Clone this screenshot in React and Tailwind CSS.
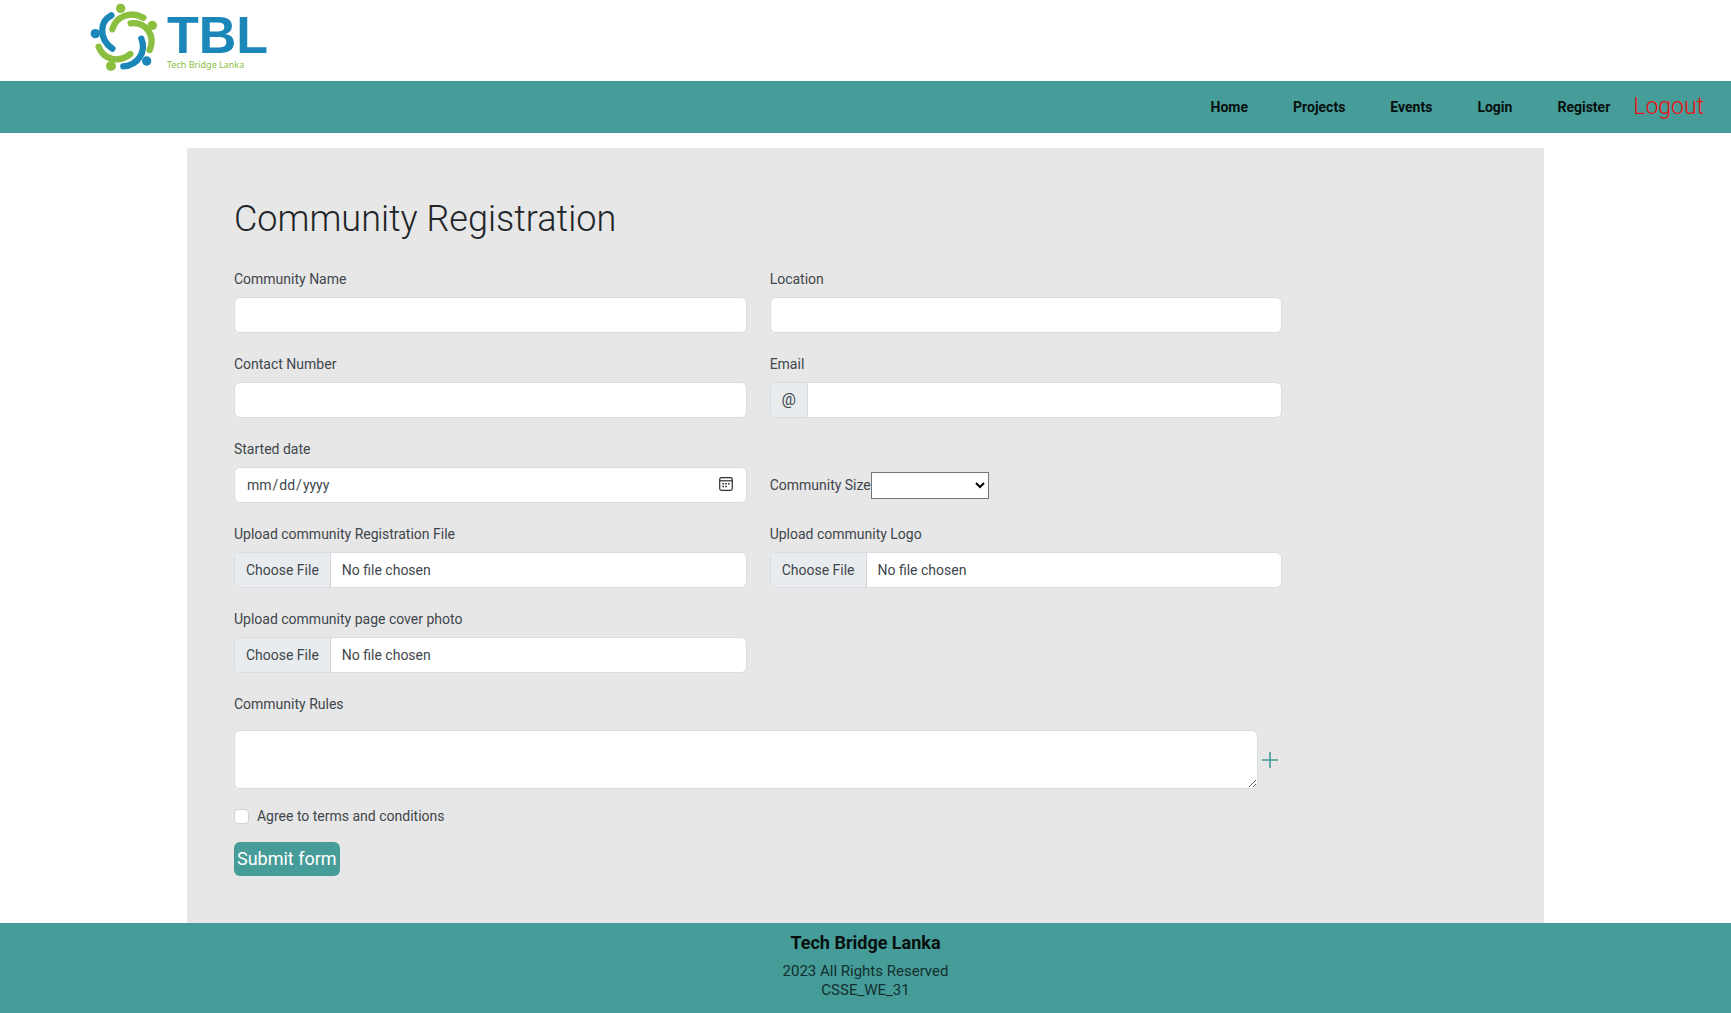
import React from "react";

const navLinks = ["Home", "Projects", "Events", "Login", "Register"];

const labelClass = "block h-6 mb-1.5 text-sm leading-6";
const controlClass =
  "block w-full h-9 rounded-md border border-[#d9dde1] bg-white px-[11px] text-sm text-[#40464c] outline-none";
const fileClass =
  "block w-full h-9 rounded-md border border-[#d9dde1] bg-white text-sm leading-[34px] text-[#40464c] overflow-hidden file:h-[34px] file:px-[11px] file:mr-[11px] file:border-0 file:border-r file:border-solid file:border-[#d3d8dd] file:bg-[#e9ecef] file:text-[#40464c] file:rounded-none";

function Logo() {
  return (
    <svg viewBox="0 0 600 240" className="h-20 w-[200px]" role="img" aria-label="TBL Tech Bridge Lanka">
      <g fill="none" strokeWidth="19" strokeLinecap="round">
        <path d="M97 88C108 48 153 32 190 53" stroke="#8bbf3f" />
        <path d="M152 70C198 64 228 108 209 150" stroke="#8bbf3f" />
        <path d="M94 46C56 66 58 119 97 146" stroke="#1b87b9" />
        <path d="M56 140C70 180 117 190 151 162" stroke="#8bbf3f" />
        <path d="M184 116C200 155 174 196 130 199" stroke="#1b87b9" />
      </g>
      <g fill="#8bbf3f">
        <circle cx="122" cy="25" r="14" />
        <circle cx="217" cy="76" r="14" />
        <circle cx="93" cy="198" r="15" />
      </g>
      <g fill="#1b87b9">
        <circle cx="46" cy="101" r="14" />
        <circle cx="200" cy="183" r="14" />
      </g>
      <text x="261" y="160" fontSize="156" fontWeight="700" fill="#1b87b9" fontFamily="'Liberation Sans', Arial, sans-serif">
        TBL
      </text>
      <text x="261" y="203" fontSize="27" fill="#8bbf3f" fontFamily="'Noto Sans', sans-serif">
        Tech Bridge Lanka
      </text>
    </svg>
  );
}

function CalendarIcon() {
  return (
    <svg viewBox="0 0 14 14" className="pointer-events-none absolute right-[14px] top-[10px] size-[14px]" fill="none" stroke="#2b2f33" aria-hidden="true">
      <rect x="0.7" y="0.7" width="12.6" height="12.6" rx="1.8" strokeWidth="1.2" />
      <path d="M1 3.8H13" strokeWidth="1.2" />
      <path d="M3.4 6.8H5M6.2 6.8H7.8M9 6.8H10.6M3.4 9.6H5M6.2 9.6H7.8" strokeWidth="1.5" />
    </svg>
  );
}

function Field({ id, label, children }) {
  return (
    <div>
      <label htmlFor={id} className={labelClass}>{label}</label>
      {children}
    </div>
  );
}

export default function App() {
  return (
    <div className="flex min-h-screen flex-col bg-white font-['Roboto',sans-serif] text-[#40464c]">
      <header>
        <div className="h-[81px] pl-20">
          <Logo />
        </div>
        <nav className="flex h-[52px] items-center justify-end bg-[#469c98] pr-[27px]">
          <ul className="flex items-center gap-[45px] text-sm font-bold text-[#07100f]">
            {navLinks.map((name) => (
              <li key={name}><a href="#">{name}</a></li>
            ))}
          </ul>
          <a href="#" className="ml-[23px] text-[23px] font-light text-[#ec1111]">Logout</a>
        </nav>
      </header>

      <main className="mx-auto mt-[15px] w-[78.4%] grow bg-[#e7e7e7] px-[47px] pt-[47px] pb-[47px]">
        <h1 className="mb-6 text-[36px] leading-[48px] font-light text-[#212529]">Community Registration</h1>
        <form className="w-[83%]" onSubmit={(e) => e.preventDefault()}>
          <div className="grid grid-cols-2 gap-x-[23px] gap-y-[19px]">
            <Field id="name" label="Community Name">
              <input id="name" type="text" className={controlClass} />
            </Field>
            <Field id="location" label="Location">
              <input id="location" type="text" className={controlClass} />
            </Field>
            <Field id="contact" label="Contact Number">
              <input id="contact" type="tel" className={controlClass} />
            </Field>
            <Field id="email" label="Email">
              <div className="flex h-9 overflow-hidden rounded-md border border-[#d9dde1] bg-white">
                <span className="flex w-[37px] items-center justify-center border-r border-[#d9dde1] bg-[#e9ecef] text-base">@</span>
                <input id="email" type="email" className="min-w-0 grow px-[11px] text-sm outline-none" />
              </div>
            </Field>
            <Field id="started" label="Started date">
              <div className="relative">
                <input id="started" type="date" className={controlClass + " [&::-webkit-calendar-picker-indicator]:opacity-0"} />
                <CalendarIcon />
              </div>
            </Field>
            <div className="flex items-end pb-1">
              <label htmlFor="size" className="text-sm leading-[27px]">Community Size</label>
              <select
                id="size"
                defaultValue=""
                className="h-[27px] w-[118px] appearance-auto border border-[#767676] bg-white text-sm text-black"
              >
                <option value=""></option>
                <option>1 - 50</option>
                <option>51 - 100</option>
              </select>
            </div>
            <Field id="regfile" label="Upload community Registration File">
              <input id="regfile" type="file" className={fileClass} />
            </Field>
            <Field id="logofile" label="Upload community Logo">
              <input id="logofile" type="file" className={fileClass} />
            </Field>
            <Field id="cover" label="Upload community page cover photo">
              <input id="cover" type="file" className={fileClass} />
            </Field>
          </div>

          <label htmlFor="rules" className="mt-[19px] block text-sm leading-6">Community Rules</label>
          <div className="mt-3.5 flex items-center">
            <textarea id="rules" className="block h-[59px] min-w-0 grow resize rounded-md border border-[#d9dde1] bg-white px-[11px] py-1.5 text-sm outline-none" />
            <button type="button" aria-label="Add rule" className="flex w-6 items-center justify-center text-[#469c98]">
              <svg viewBox="0 0 16 16" className="size-4" stroke="currentColor" strokeWidth="1.6" aria-hidden="true">
                <path d="M8 0V16M0 8H16" />
              </svg>
            </button>
          </div>

          <div className="mt-[15px] flex h-6 items-center gap-2">
            <input id="agree" type="checkbox" className="size-[15px] appearance-none rounded-[4px] border border-[#d0d4d8] bg-white checked:bg-[#469c98]" />
            <label htmlFor="agree" className="text-sm leading-6">Agree to terms and conditions</label>
          </div>
          <button type="submit" className="mt-3.5 block h-[34px] rounded-md bg-[#469c98] px-[3px] text-lg text-white">
            Submit form
          </button>
        </form>
      </main>

      <footer className="h-[91px] bg-[#469c98] pt-2 text-center text-[#12302f]">
        <h2 className="mb-[7px] text-lg leading-6 font-bold text-[#07100f]">Tech Bridge Lanka</h2>
        <p className="text-[15px] leading-[19px]">2023 All Rights Reserved</p>
        <p className="text-[15px] leading-[19px]">CSSE_WE_31</p>
      </footer>
    </div>
  );
}
